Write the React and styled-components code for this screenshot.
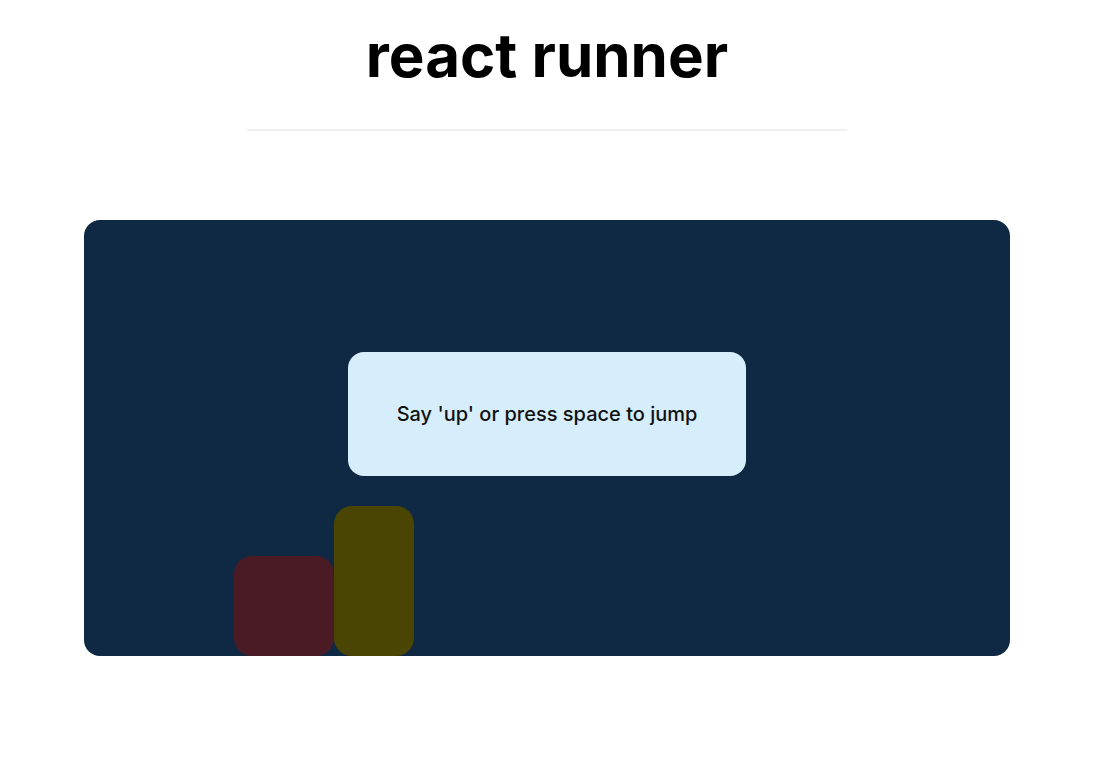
import React from "react";
import styled, { createGlobalStyle } from "styled-components";

const Global = createGlobalStyle`
  html, body { margin: 0; padding: 0; background: #ffffff; }
  body { font-family: Inter, "Noto Sans", sans-serif; color: #000; }
`;

const Page = styled.div`
  width: 1094px;
  display: flex;
  flex-direction: column;
  align-items: center;
`;

const Title = styled.h1`
  margin: 19px 0 0;
  font-size: 60px;
  font-weight: 700;
  line-height: normal;
`;

const Divider = styled.hr`
  width: 600px;
  margin: 38px 0 0;
  border: none;
  border-top: 2px solid #f0f0f0;
`;

const Stage = styled.div`
  position: relative;
  margin-top: 89px;
  width: 926px;
  height: 436px;
  border-radius: 16px;
  background: #0f2945;
  overflow: hidden;
`;

const Message = styled.div`
  position: absolute;
  top: 132px;
  left: 50%;
  transform: translateX(-50%);
  width: 398px;
  height: 124px;
  border-radius: 16px;
  background: #d6eefb;
  display: flex;
  align-items: center;
  justify-content: center;
  font-size: 20px;
  font-weight: 500;
  color: #111;
`;

const Block = styled.div`
  position: absolute;
  bottom: 0;
  left: ${(p) => p.$x}px;
  width: ${(p) => p.$w}px;
  height: ${(p) => p.$h}px;
  border-radius: 18px;
  background: ${(p) => p.$color};
`;

export default function App() {
  return (
    <>
      <Global />
      <Page>
        <Title>react runner</Title>
        <Divider />
        <Stage>
          <Message>Say 'up' or press space to jump</Message>
          <Block $x={150} $w={100} $h={100} $color="#4a1a25" />
          <Block $x={250} $w={80} $h={150} $color="#4a4502" />
        </Stage>
      </Page>
    </>
  );
}
